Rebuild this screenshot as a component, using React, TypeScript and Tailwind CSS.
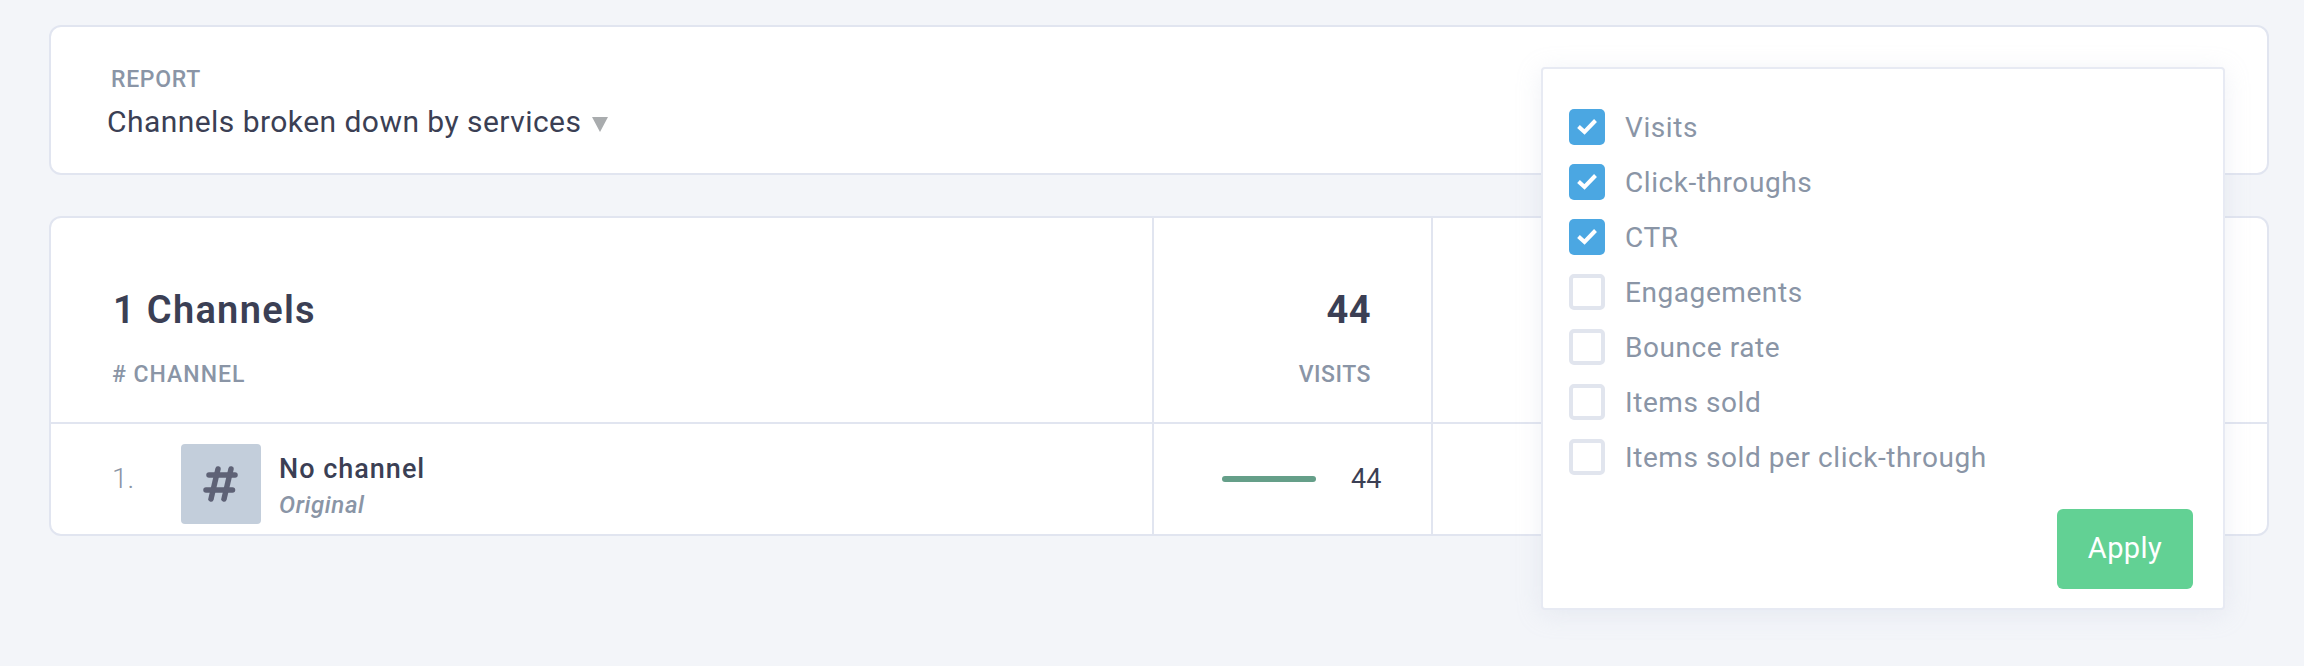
const metrics = [
  { label: 'Visits', checked: true },
  { label: 'Click-throughs', checked: true },
  { label: 'CTR', checked: true },
  { label: 'Engagements', checked: false },
  { label: 'Bounce rate', checked: false },
  { label: 'Items sold', checked: false },
  { label: 'Items sold per click-through', checked: false },
];

function HashIcon() {
  return (
    <svg width="36" height="36" viewBox="0 0 36 36" fill="none" stroke="#5e6276" strokeWidth="5.5" strokeLinecap="round">
      <path d="M15 3 L8 33" />
      <path d="M28 3 L21 33" />
      <path d="M6 9 L32 9" />
      <path d="M3 24 L29.5 24" />
    </svg>
  );
}

function CheckMark() {
  return (
    <svg width="20" height="16" viewBox="0 0 20 16" fill="none" stroke="#ffffff" strokeWidth="4">
      <path d="M1.5 7.5 L7.5 13 L18.5 1.5" />
    </svg>
  );
}

export default function App() {
  return (
    <div className="relative min-h-[666px] bg-[#f3f5f9] pl-[49px] pr-[35px] pt-[25px] font-['Roboto',sans-serif] text-[#3b3f54]">
      <div className="h-[150px] rounded-[12px] border-2 border-[#e1e5f0] bg-white pl-[56px] pt-[38px]">
        <div className="pl-[4px] text-[23px] leading-[30px] font-medium tracking-[0.7px] text-[#8a95a6]">REPORT</div>
        <div className="mt-[7px] flex items-center gap-[11px] text-[30px] leading-[40px] tracking-[0.45px]">
          Channels broken down by services
          <span className="mt-[4px] h-0 w-0 border-x-[8px] border-t-[15px] border-x-transparent border-t-[#a9acae]" />
        </div>
      </div>

      <div className="mt-[41px] grid h-[320px] grid-cols-[1101px_279px_1fr] grid-rows-[206px_1fr] overflow-hidden rounded-[12px] border-2 border-[#e1e5f0] bg-white">
        <div className="border-b-2 border-[#e1e5f0] pl-[62px] pt-[68px]">
          <div className="text-[38px] leading-[48px] font-semibold tracking-[1.3px]">1 Channels</div>
          <div className="-ml-[1px] mt-[26px] text-[23px] leading-[30px] font-medium tracking-[1px] text-[#8a95a6]"># CHANNEL</div>
        </div>
        <div className="border-b-2 border-l-2 border-[#e1e5f0] pr-[60px] pt-[68px] text-right">
          <div className="text-[38px] leading-[48px] font-bold tracking-[0.5px]">44</div>
          <div className="mt-[26px] text-[23px] leading-[30px] font-medium tracking-[0.5px] text-[#8a95a6]">VISITS</div>
        </div>
        <div className="border-b-2 border-l-2 border-[#e1e5f0]" />

        <div className="flex items-center pl-[61px]">
          <span className="w-[69px] text-[28px] font-light text-[#8a95a6]">1.</span>
          <div className="mt-[9px] flex h-[80px] w-[80px] items-center justify-center rounded-[4px] bg-[#c3cedb]">
            <HashIcon />
          </div>
          <div className="ml-[18px] mt-[12px]">
            <div className="text-[27px] leading-[36px] font-medium tracking-[1px]">No channel</div>
            <div className="mt-[3px] text-[24px] leading-[30px] font-medium italic tracking-[0.6px] text-[#8a95a6]">Original</div>
          </div>
        </div>
        <div className="flex items-center border-l-2 border-[#e1e5f0] pl-[68px]">
          <div className="h-[6px] w-[94px] rounded-full bg-[#659f89]" />
          <span className="ml-[35px] text-[27px]">44</span>
        </div>
        <div className="border-l-2 border-[#e1e5f0]" />
      </div>

      <div className="absolute left-[1541px] top-[67px] h-[543px] w-[684px] rounded-[4px] border-2 border-[#e7eaf3] bg-white pl-[26px] pt-[40px] shadow-[0_4px_24px_rgba(190,198,220,0.25)]">
        <div className="flex flex-col gap-[19px]">
          {metrics.map((m) => (
            <div key={m.label} className="flex h-[36px] items-center gap-[20px]">
              {m.checked ? (
                <span className="flex h-[36px] w-[36px] items-center justify-center rounded-[5px] bg-[#4ba7e2]">
                  <CheckMark />
                </span>
              ) : (
                <span className="h-[36px] w-[36px] rounded-[5px] border-[4px] border-[#e1e5ee]" />
              )}
              <span className="mt-[1px] text-[28px] tracking-[0.57px] text-[#8a95a6]">{m.label}</span>
            </div>
          ))}
        </div>
        <button
          type="button"
          className="absolute bottom-[19px] right-[30px] h-[80px] w-[136px] rounded-[6px] bg-[#62d194] text-[29px] tracking-[0.4px] text-white"
        >
          Apply
        </button>
      </div>
    </div>
  );
}
